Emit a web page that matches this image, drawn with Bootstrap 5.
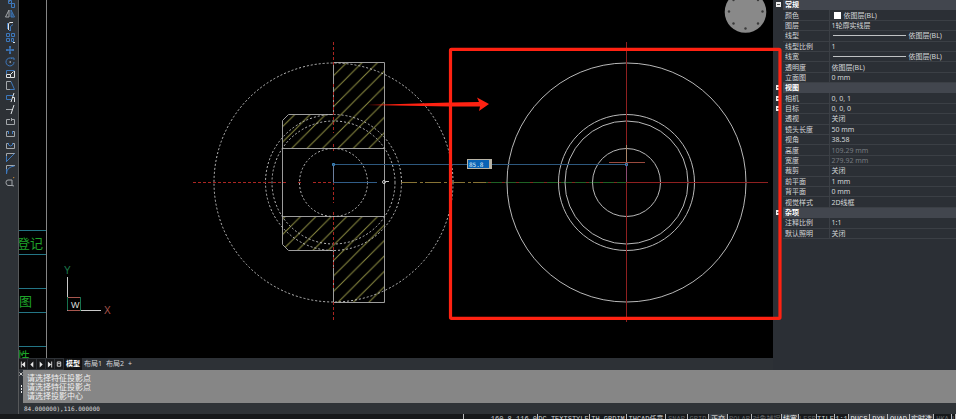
<!DOCTYPE html>
<html lang="zh-CN">
<head>
<meta charset="utf-8">
<meta name="viewport" content="width=device-width, initial-scale=1">
<title>CAD</title>
<link href="https://cdn.jsdelivr.net/npm/bootstrap@5.3.0/dist/css/bootstrap.min.css" rel="stylesheet">
<style>
:root{--chrome:#2d3136;--ink:#d4d6d8}
body{font-family:"Noto Sans","Noto Sans CJK SC",sans-serif;font-size:7px;line-height:10px;color:var(--ink);background:var(--chrome)}
button{background:none;border:0;padding:0;color:inherit;font-size:inherit;line-height:inherit}
svg{display:block}
.toolstrip{width:19px;background:var(--chrome);border-right:1px solid #56585a;padding-left:2px}
.toolstrip button{height:12px;flex:none;display:flex;align-items:center;justify-content:center}
.toolstrip button:first-child{height:8px;align-items:flex-end}
.toolstrip svg{width:10px;height:10px;fill:none;stroke:#a3a7ab;stroke-width:1}
.toolstrip .b{stroke:#3d78bd}
.toolstrip .w{stroke:#dfe2e4}
.canvas{background:#000;min-height:0}
.canvas svg{position:absolute;left:0;top:0;width:754px;height:100%}
.canvas .marks{overflow:visible;z-index:3;pointer-events:none}
.dimbox{position:absolute;left:448px;top:159px;width:25px;height:10px;padding:0 1px;border:1px solid #b9b4a6;border-right-width:3px;background:#0a63b5;color:#dcebf8;font:6px/8px "DejaVu Sans Mono",monospace;border-radius:0;z-index:2}
.sheets{height:12px;background:var(--chrome)}
.sheets .nav-btn{width:8px;height:10px;margin-right:1px;background:#17181a;display:flex;align-items:center;justify-content:center}
.sheets .nav-btn svg{width:6px;height:7px;fill:#e6e6e6;stroke:#e6e6e6;stroke-width:0}
.sheets .sheet{padding:0 2px;height:12px}
.sheets .sheet.active{background:#111214;color:#fff;font-weight:700}
.props{width:183px;background:#2b2f35}
.props table{width:100%;height:239px;table-layout:fixed;border-collapse:collapse}
.props td,.props th{padding:0 0 0 2px;line-height:9px;font-weight:400;border-bottom:1px solid #3b3f45;white-space:nowrap;overflow:hidden}
.props td:first-child{border-bottom:0;background:#2b2f35;padding:0 0 0 3px}
.props th{border-right:1px solid #3b3f45}
.props .grp th{background:#42464e;color:#fff;font-weight:700;border-color:#42464e}
.props .off{color:#777b80}
.tog{width:5px;height:5px;background:#eee;display:flex;align-items:center;justify-content:center}
.tog::after{content:"";width:3px;height:1px;background:#555}
.chip{width:7px;height:7px;background:#fff;margin:0 3px 0 2px}
.rule{width:73px;height:1px;background:#c0c2c4;margin:0 3px 0 1px}
.grip{width:4px;padding-top:2px}
.grip svg{width:4px;height:24px}
.history{background:#868686;color:#f0f0f0;height:33px;padding:3px 4px;font-size:8px;line-height:9px}
.cmd{height:11px;width:100%;background:#2f3337;border:0;color:#dcdcdc;padding:0 1px;font:6px/11px "DejaVu Sans Mono",monospace;outline:0}
.status{height:5px;overflow:hidden;background:#17191b;display:grid;grid-template-columns:1fr 74px 52px 37px 39px 22px 21px 19px 24px 30px 17px 18px 18px 14px 21px 18px 22px 24px 18px 4px;font-family:"Liberation Mono","Noto Sans CJK SC",monospace;line-height:10px}
.status button{height:10px;border-right:1px solid #b8babc;color:#cfd1d3;white-space:nowrap;overflow:hidden}
.status .dim{color:#686b6e}
.status .on{background:#3b3f44;color:#f0f0f0}
</style>
<script src="https://cdn.jsdelivr.net/npm/bootstrap@5.3.0/dist/js/bootstrap.bundle.min.js"></script>
</head>
<body class="d-flex flex-column vh-100 overflow-hidden">
<div class="d-flex flex-grow-1 overflow-hidden">
<nav class="toolstrip d-flex flex-column flex-shrink-0" aria-label="修改">
<button aria-label="复制"><svg viewBox="0 0 10 10"><path d="M0 1h4v3"/><path class="b" d="M3.500 2.500h3v3h-3zM6.500 5.500h3v4h-3z"/></svg></button>
<button aria-label="镜像"><svg viewBox="0 0 10 10"><path d="M4 1v7H.5z"/><path class="b" d="M6 1v7h3.500zM7 4v4"/></svg></button>
<button aria-label="偏移"><svg viewBox="0 0 10 10"><path class="w" d="M3.500 9V2.500L5 1.500h3"/><path class="b" d="M2.500 8V2M5.500 9V5.500L8 3.500M4 9.500h2"/></svg></button>
<button aria-label="阵列"><svg viewBox="0 0 10 10"><path class="b" d="M1.500.5h3v3h-3zM6.500.5h3v3h-3zM1.500 5.500h3v3h-3zM6.500 5.500h2v3h-2z"/><path class="w" d="M8 9.500h2"/></svg></button>
<button aria-label="移动"><svg viewBox="0 0 10 10"><path class="b" d="M5 1v8M1 5h8M4 2h2M4 8h2M2 4v2M8 4v2" stroke-width="1.300"/></svg></button>
<button aria-label="旋转"><svg viewBox="0 0 10 10"><path class="b" d="M7 1.500A4 4 0 1 0 9 5M6 1h3v2"/><path class="w" d="M4.500 5h1.500"/></svg></button>
<button aria-label="缩放"><svg viewBox="0 0 10 10"><path class="b" d="M1.500 5V1.500h8"/><path class="w" d="M1.500 5.500h4v3h-4zM5.500 5.500l3-3M9.500 2v6.500h-4"/></svg></button>
<button aria-label="拉伸"><svg viewBox="0 0 10 10"><path d="M6 .5H1.500v8H5"/><path class="b" d="M6 .5l3.500 8H5"/></svg></button>
<button aria-label="修剪"><svg viewBox="0 0 10 10"><path class="b" d="M6 6.500H1.500v-4H8"/><path class="w" d="M9 0L6 9M7 4.500h2.500V9"/></svg></button>
<button aria-label="延伸"><svg viewBox="0 0 10 10"><path d="M1 4.500h6"/><path class="w" d="M9 0L6 9"/></svg></button>
<button aria-label="打断"><svg viewBox="0 0 10 10"><path d="M5 2.500H1.500v5h8v-5H7M6.500 1v3"/></svg></button>
<button aria-label="打断两点"><svg viewBox="0 0 10 10"><path d="M3 2.500H1.500v5h8v-5H7"/><path class="b" d="M3.500 2v3M7.500 2v3"/></svg></button>
<button aria-label="合并"><svg viewBox="0 0 10 10"><path d="M3 2.500H1.500v5h8v-5H8"/><path class="b" d="M3.500 2v2l2 1 2-1V2"/></svg></button>
<button aria-label="倒角"><svg viewBox="0 0 10 10"><path d="M1.500 9V.5H10"/><path class="b" d="M1.500 8.500l8-8M1.500 9V3"/></svg></button>
<button aria-label="圆角"><svg viewBox="0 0 10 10"><path d="M1.500 9V.5H10"/><path class="b" d="M1.500 9q0-7 8-8M1.500 9V4"/></svg></button>
<button aria-label="分解"><svg viewBox="0 0 10 10"><path d="M7 8.500H3q-2-.5-2-3t2-2.500h4v5.500l2 .5"/><path d="M8 1l1.500-1" stroke="#d08a35"/></svg></button>
</nav>
<main class="d-flex flex-column flex-grow-1">
<div class="canvas position-relative flex-grow-1">
<svg viewBox="19 0 754 358" preserveAspectRatio="xMinYMin slice" fill="none" stroke-width="1" role="img" aria-label="图形">
<defs>
<pattern id="hatch" x="8.9" y="0" width="15.4" height="15.4" patternUnits="userSpaceOnUse"><path d="M0 15.400L15.400 0M-1 1L1-1M14.400 16.400l2-2" stroke="#8e8e42" stroke-width="1"/></pattern>
</defs>
<path d="M46.500 0v358" stroke="#858585"/>
<path d="M19 230.500h27M19 254.500h27M19 288.500h27M19 312.500h27M19 346.500h27" stroke="#237585"/>
<g fill="#1fa32a" font-family="Noto Sans CJK SC" font-size="13"><text x="17" y="248">登记</text><text x="19" y="306">图</text><text x="17" y="361">性</text></g>
<path d="M67.500 277v33.500h33.500" stroke="#c9c9c9"/>
<path d="M68 297.500h12M68 310.500h12" stroke="#a8574f"/><path d="M67.500 297v13M80.500 297v14" stroke="#17714d"/>
<g font-family="Liberation Sans" font-size="10"><text x="64" y="274" fill="#1d7b4d">Y</text><text x="104" y="314" fill="#a8544c">X</text><text x="71" y="308" fill="#ddd" font-size="9">W</text></g>
<path fill="url(#hatch)" d="M333.500 62.500h51v86h-102v-28l6-6h45zM282.500 216.500h102v86h-51v-52h-45l-6-6z"/>
<path stroke="#9c9c9c" d="M333.500 62.500h51v240h-51v-52h-45l-6-6v-124l6-6h45zM282.500 148.500h102M282.500 216.500h102"/>
<g stroke="#bdbdbd" stroke-dasharray="2 2"><circle cx="333.5" cy="182.500" r="119.500"/><circle cx="333.5" cy="182.500" r="68"/><circle cx="333.5" cy="182.500" r="61.500"/><circle cx="333.5" cy="182.500" r="34"/></g>
<path stroke="#ab2622" stroke-dasharray="3 2" d="M333.500 42v25M333.500 84v4M333.500 92v41M333.500 144v7M333.500 182v21M333.500 212v56M333.500 280v10M333.500 302v20M193 182.500h94M298 182.500h5M313 182.500h20"/>
<path stroke="#6c7f9e" d="M333.500 164v18"/><path stroke="#315d88" d="M333 182.500h44"/>
<circle cx="384" cy="182" r="1.500" stroke="#ccc"/><path stroke="#ccc" d="M386 181.500h3"/>
<path stroke="#877335" stroke-dasharray="16 3 3 2" d="M401 182.500h85"/>
<path stroke="#1f6224" d="M486 182.500h140"/><path stroke="#842520" stroke-dasharray="3 11" d="M488 182.500h138"/>
<g stroke="#b8b8b8"><circle cx="626.500" cy="182.500" r="119.500"/><circle cx="626.500" cy="182.500" r="68"/><circle cx="626.500" cy="182.500" r="61.500"/><circle cx="626.500" cy="182.500" r="34"/></g>
<path stroke="#8f2020" d="M626.500 42v280M626 182.500h142"/>
<path stroke="#a98468" d="M626.500 145v17"/><path stroke="#8c4b72" d="M626.500 166v16"/><path stroke="#9a4a3e" d="M609 162.500h36"/>
<path stroke="#2d587e" d="M333 164.500h293"/>
<path stroke="#3b83ba" d="M332.500 163.500h2v2h-2zM625.500 163.500h2v2h-2z"/>
<circle cx="745.500" cy="12" r="20.800" fill="#898989"/>
<g fill="#3b3b3b"><circle cx="729" cy="11.500" r="1.200"/><circle cx="733.500" cy="23.500" r="1.200"/><circle cx="745.500" cy="28.500" r="1.200"/><circle cx="758" cy="23.500" r="1.200"/><circle cx="762.500" cy="11.500" r="1.200"/><circle cx="733.500" cy="0" r="1.200"/><circle cx="758" cy="0" r="1.200"/></g>
</svg>
<input class="dimbox" value="85.8" aria-label="距离">
<svg class="marks" viewBox="19 0 754 358" preserveAspectRatio="xMinYMin slice" aria-hidden="true"><rect x="450.500" y="49.300" width="329.500" height="269" rx="1" fill="none" stroke="#ff2212" stroke-width="3.200"/><path fill="#ff2212" d="M367 105l83-2.500 29-.5-2-4.500 12 6.500-10 7 1-4.500-30 0z"/></svg>
</div>
<div class="sheets d-flex align-items-center flex-shrink-0" role="tablist">
<button class="nav-btn" aria-label="首个"><svg viewBox="0 0 7 7"><path d="M1 0h1v7H1zM6 0v7L2 3.500z"/></svg></button>
<button class="nav-btn" aria-label="上一个"><svg viewBox="0 0 7 7"><path d="M5 0v7L1.500 3.500z"/></svg></button>
<button class="nav-btn" aria-label="下一个"><svg viewBox="0 0 7 7"><path d="M2 0v7l3.500-3.500z"/></svg></button>
<button class="nav-btn" aria-label="末个"><svg viewBox="0 0 7 7"><path d="M5 0h1v7H5zM1 0v7l4-3.500z"/></svg></button>
<button class="nav-btn" aria-label="列表"><svg viewBox="0 0 7 7"><path fill="none" stroke-width="1" d="M1.500.5h4v5h-4zM2 2.500h3"/></svg></button>
<button class="sheet active" role="tab">模型</button><button class="sheet" role="tab">布局1</button><button class="sheet" role="tab">布局2</button><button class="sheet" aria-label="新建布局">+</button>
</div>
</main>
<aside class="props flex-shrink-0">
<table>
<colgroup><col style="width:10px"><col style="width:46px"><col></colgroup>
<tbody>
<tr class="grp"><td><button class="tog" aria-label="折叠"></button></td><th colspan="2">常规</th></tr>
<tr><td></td><th>颜色</th><td><div class="d-flex align-items-center"><span class="chip"></span>依图层(BL)</div></td></tr>
<tr><td></td><th>图层</th><td>1轮廓实线层</td></tr>
<tr><td></td><th>线型</th><td><div class="d-flex align-items-center"><span class="rule"></span>依图层(BL)</div></td></tr>
<tr><td></td><th>线型比例</th><td>1</td></tr>
<tr><td></td><th>线宽</th><td><div class="d-flex align-items-center"><span class="rule"></span>依图层(BL)</div></td></tr>
<tr><td></td><th>透明度</th><td>依图层(BL)</td></tr>
<tr><td></td><th>立面图</th><td>0 mm</td></tr>
<tr class="grp"><td><button class="tog" aria-label="折叠"></button></td><th colspan="2">视图</th></tr>
<tr><td><button class="tog" aria-label="展开"></button></td><th>相机</th><td>0, 0, 1</td></tr>
<tr><td><button class="tog" aria-label="展开"></button></td><th>目标</th><td>0, 0, 0</td></tr>
<tr><td></td><th>透视</th><td>关闭</td></tr>
<tr><td></td><th>镜头长度</th><td>50 mm</td></tr>
<tr><td></td><th>视角</th><td>38.58</td></tr>
<tr><td></td><th>高度</th><td class="off">109.29 mm</td></tr>
<tr><td></td><th>宽度</th><td class="off">279.92 mm</td></tr>
<tr><td></td><th>裁剪</th><td>关闭</td></tr>
<tr><td></td><th>前平面</th><td>1 mm</td></tr>
<tr><td></td><th>背平面</th><td>0 mm</td></tr>
<tr><td></td><th>视觉样式</th><td>2D线框</td></tr>
<tr class="grp"><td><button class="tog" aria-label="折叠"></button></td><th colspan="2">杂项</th></tr>
<tr><td></td><th>注释比例</th><td>1:1</td></tr>
<tr><td></td><th>默认照明</th><td>关闭</td></tr>
</tbody>
</table>
</aside>
</div>
<section class="d-flex flex-shrink-0">
<div class="toolstrip flex-shrink-0"></div>
<div class="grip flex-shrink-0"><svg viewBox="0 0 4 24" fill="none"><path stroke="#ccc" d="M.5.5l3 3M3.500.5l-3 3"/><path stroke="#eee" stroke-dasharray="2 1" d="M2.500 13v9"/></svg></div>
<div class="flex-grow-1"><div class="history"><div>请选择特征投影点</div><div>请选择特征投影点</div><div>请选择投影中心</div></div>
<input class="cmd d-block" aria-label="命令行" value="84.000000),116.000000"></div>
</section>
<footer class="status flex-shrink-0">
<button aria-label="状态"></button><button class="text-end">160.8,116.0</button><button>DC_TEXTSTYLE</button><button>TH_GBDIM</button><button>THCAD任意</button><button class="dim">SNAP</button><button class="dim">GRID</button><button class="on">正交</button><button class="dim">POLAR</button><button class="dim">对象捕捉</button><button class="on">线宽</button><button class="dim">LESP</button><button>TILE</button><button>1:1</button><button class="on">DUCS</button><button class="on">DYN</button><button class="on">QUAD</button><button class="on">实时选</button><button class="dim">HKA</button><button class="dim">L</button>
</footer>
</body>
</html>
